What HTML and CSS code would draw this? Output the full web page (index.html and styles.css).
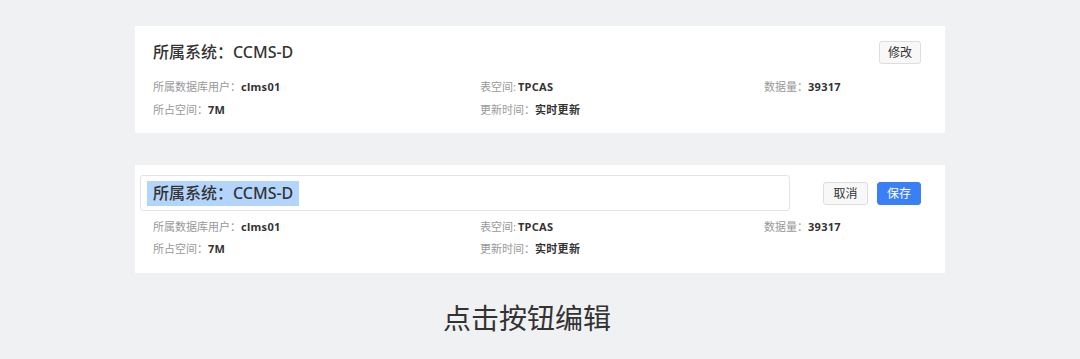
FILE: index.html
```html
<!DOCTYPE html>
<html lang="zh">
<head>
<meta charset="utf-8">
<link rel="stylesheet" href="styles.css">
</head>
<body>
<div class="page">
  <section class="card">
    <div class="head">
      <h2 class="title">所属系统：CCMS-D</h2>
      <div class="actions">
        <button class="btn">修改</button>
      </div>
    </div>
    <div class="grid">
      <div class="item"><span class="lbl">所属数据库用户：</span><span class="val">clms01</span></div>
      <div class="item"><span class="lbl">表空间:</span><span class="val tight">TPCAS</span></div>
      <div class="item"><span class="lbl">数据量：</span><span class="val">39317</span></div>
      <div class="item"><span class="lbl">所占空间：</span><span class="val">7M</span></div>
      <div class="item"><span class="lbl">更新时间：</span><span class="val">实时更新</span></div>
    </div>
  </section>

  <section class="card edit">
    <div class="head">
      <div class="input"><span class="sel">所属系统：CCMS-D</span></div>
      <div class="actions">
        <button class="btn wide">取消</button>
        <button class="btn primary">保存</button>
      </div>
    </div>
    <div class="grid">
      <div class="item"><span class="lbl">所属数据库用户：</span><span class="val">clms01</span></div>
      <div class="item"><span class="lbl">表空间:</span><span class="val tight">TPCAS</span></div>
      <div class="item"><span class="lbl">数据量：</span><span class="val">39317</span></div>
      <div class="item"><span class="lbl">所占空间：</span><span class="val">7M</span></div>
      <div class="item"><span class="lbl">更新时间：</span><span class="val">实时更新</span></div>
    </div>
  </section>

  <p class="caption">点击按钮编辑</p>
</div>
</body>
</html>
```

FILE: styles.css
```css
* { box-sizing: border-box; }
html, body {
  margin: 0;
  padding: 0;
  background: #f0f1f3;
  font-family: "Noto Sans", "Noto Sans CJK SC", sans-serif;
  color: #333;
}
.page {
  width: 1080px;
  height: 359px;
  padding: 26px 135px 0 135px;
}
.card {
  background: #fff;
  height: 107px;
  padding: 15px 24px 0 18px;
}
.card + .card { margin-top: 32px; height: 108px; }
.head {
  display: flex;
  align-items: center;
  height: 23px;
}
.title {
  margin: 0;
  flex: 1;
  font-size: 16px;
  font-weight: 500;
  line-height: 23px;
  color: #333;
}
.actions {
  display: flex;
  gap: 9px;
}
.btn {
  width: 42px;
  height: 23px;
  padding: 0;
  border: 1px solid #dedede;
  border-radius: 3px;
  background: #f8f8f8;
  font-family: inherit;
  font-size: 12px;
  line-height: 21px;
  color: #333;
  text-align: center;
}
.edit .btn { width: 44px; }
.edit .btn.wide { width: 45px; }
.btn.primary {
  background: #3a7ff6;
  border-color: #3a7ff6;
  color: #fff;
}
.grid {
  display: grid;
  grid-template-columns: 327px 284px 1fr;
  margin-top: 11px;
}
.item {
  font-size: 11px;
  line-height: 23px;
  white-space: nowrap;
}
.lbl { color: #999; }
.val { color: #333; font-weight: 700; letter-spacing: 0.3px; }
.val.tight { margin-left: 2px; }

.edit { padding-top: 10px; }
.edit .head {
  height: 36px;
  margin-left: -13px;
}
.input {
  flex: 1;
  height: 36px;
  border: 1px solid #e3e3e3;
  border-radius: 3px;
  padding: 4px 6px;
  margin-right: 33px;
  display: flex;
  align-items: center;
}
.sel {
  background: #b4d5fb;
  padding: 0 6px;
  font-size: 16px;
  font-weight: 500;
  line-height: 25px;
  color: #333;
}
.edit .grid { margin-top: 5px; }
.edit .item { line-height: 22px; }

.caption {
  margin: 25px 0 0 308px;
  font-size: 28px;
  line-height: 40px;
  color: #333;
}
```
